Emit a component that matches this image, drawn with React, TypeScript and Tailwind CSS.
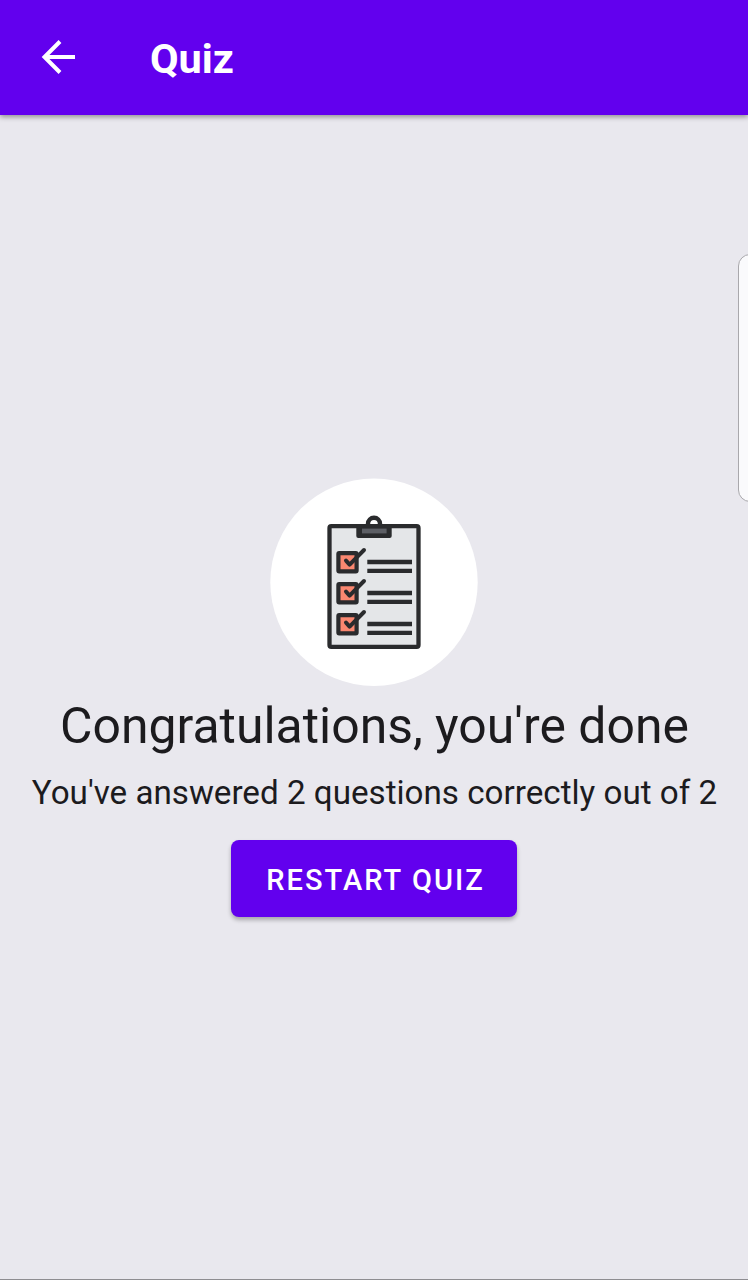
function BackArrow() {
  return (
    <svg viewBox="0 0 36 36" className="h-9 w-9" fill="none" stroke="#fff" strokeWidth="4">
      <path d="M35 18H5M20 2.5 4.5 18 20 33.5" />
    </svg>
  );
}

function Clipboard() {
  return (
    <svg viewBox="270 478 208 208" className="h-[208px] w-[208px]" fill="none">
      <circle cx="374" cy="582.2" r="103.7" fill="#fff" />
      <rect x="329.5" y="526.1" width="89" height="120.8" rx="1.8" fill="#e4e6e8" stroke="#2a2b2d" strokeWidth="4.3" />
      <path d="M368 526v-2.2a6 6 0 0 1 12 0v2.2" fill="#fff" stroke="#2a2b2d" strokeWidth="4.4" />
      <path d="M356.3 524h35.4v12a2 2 0 0 1-2 2h-31.4a2 2 0 0 1-2-2z" fill="#2a2b2d" />
      <rect x="362" y="528.6" width="24.6" height="4.8" fill="#5d5f65" />
      {[0, 31, 62].map((y) => (
        <g key={y} transform={`translate(0 ${y})`} stroke="#2a2b2d">
          <rect x="338.4" y="553.1" width="18.2" height="18.2" rx="0.8" fill="#fa8770" strokeWidth="4.2" />
          <path d="m346 560.6 3.6 4L364 550" strokeWidth="4" strokeLinecap="round" strokeLinejoin="round" />
          <path d="M367.3 562h44.7M367.3 570.8h44.7" strokeWidth="4.3" />
        </g>
      ))}
    </svg>
  );
}

export default function App() {
  return (
    <div className="relative flex h-[1280px] w-[748px] flex-col overflow-hidden border-b border-[#8e8d91] bg-[#e9e8ee] font-['Roboto',sans-serif] text-[#1c1b1e]">
      <header className="flex h-[115px] shrink-0 items-center bg-[#6200ee] pb-0.5 pl-10 text-white shadow-[0_2px_5px_rgba(0,0,0,0.38)]">
        <button aria-label="Back">
          <BackArrow />
        </button>
        <h1 className="ml-[74px] pt-1 text-[41.5px] leading-[48px] font-bold">Quiz</h1>
      </header>
      <main className="flex flex-col items-center pt-[363px]">
        <Clipboard />
        <h2 className="mt-[10px] pl-px text-[49.9px] leading-[60px] whitespace-nowrap">Congratulations, you're done</h2>
        <p className="mt-[17px] pl-px text-[33.2px] leading-[40px] whitespace-nowrap">You've answered 2 questions correctly out of 2</p>
        <button className="mt-[27px] h-[77px] w-[286px] rounded-[8px] bg-[#6200ee] pt-1 pl-[3px] text-[29px] font-medium tracking-[2.05px] text-white shadow-[0_3px_4px_rgba(0,0,0,0.28)]">
          RESTART QUIZ
        </button>
      </main>
      <div className="absolute top-[254px] left-[738px] h-[248px] w-8 rounded-[12px] border border-[#a9a8ac] bg-[#fafafc]" />
    </div>
  );
}
